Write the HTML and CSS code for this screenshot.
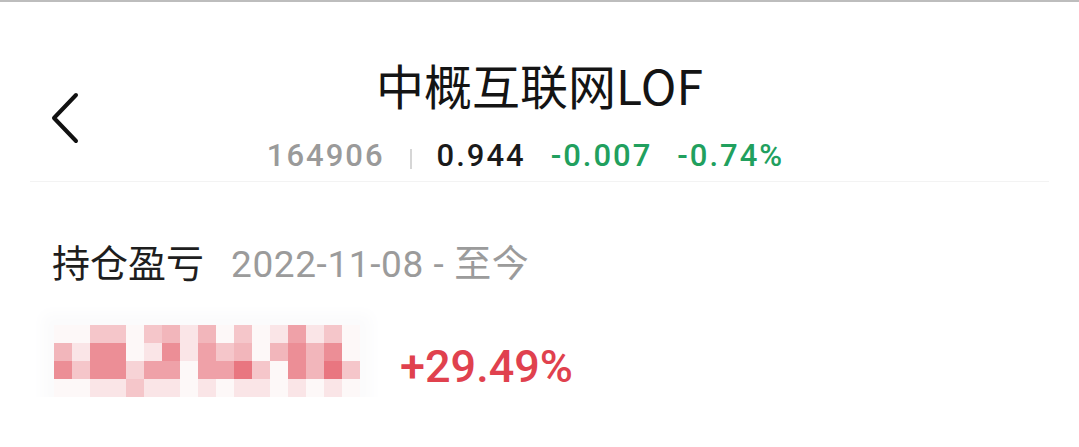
FILE: index.html
```html
<!DOCTYPE html>
<html lang="zh-CN">
<head>
    <meta charset="UTF-8">
    <title>中概互联网LOF</title>
    <link rel="stylesheet" href="styles.css">
</head>
<body>
    <div class="topline"></div>
    <div id="header">
        <div class="back">
            <svg width="30" height="54" viewBox="0 0 30 54">
                <polyline points="26,4 4,27 26,50" fill="none" stroke="#111" stroke-width="4" stroke-linecap="round" stroke-linejoin="round"/>
            </svg>
        </div>
        <div class="title-box">
            <div class="title">中概互联网LOF</div>
            <div class="quote">
                <span class="code">164906</span>
                <span class="sep"></span>
                <span class="price">0.944</span>
                <span class="down">-0.007</span>
                <span class="down">-0.74%</span>
            </div>
        </div>
    </div>
    <div class="divider"></div>
    <div id="profit">
        <div class="profit-head">
            <span class="label">持仓盈亏</span>
            <span class="range">2022-11-08 - 至今</span>
        </div>
        <div class="profit-row">
            <div class="mosaic">
                <!-- 第1行 -->
                <i class="s0"></i><i class="s0"></i><i class="s2"></i><i class="s2"></i><i class="s0"></i><i class="s2"></i><i class="s2b"></i><i class="s1"></i><i class="s2b"></i><i class="s0"></i><i class="s2"></i><i class="s0"></i><i class="s1"></i><i class="s3"></i><i class="s1"></i><i class="s2"></i><i class="s0"></i>
                <!-- 第2行 -->
                <i class="s2b"></i><i class="s1"></i><i class="s4"></i><i class="s4"></i><i class="s0"></i><i class="s1"></i><i class="s4"></i><i class="s1"></i><i class="s3"></i><i class="s2"></i><i class="s2b"></i><i class="s0"></i><i class="s2b"></i><i class="s4"></i><i class="s2b"></i><i class="s4"></i><i class="s0"></i>
                <!-- 第3行 -->
                <i class="s4"></i><i class="s2"></i><i class="s4"></i><i class="s4"></i><i class="s1b"></i><i class="s3"></i><i class="s3"></i><i class="s0"></i><i class="s3"></i><i class="s3"></i><i class="s5"></i><i class="s2"></i><i class="s0"></i><i class="s4"></i><i class="s2b"></i><i class="s5"></i><i class="s2"></i>
                <!-- 第4行 -->
                <i class="s0"></i><i class="s0"></i><i class="s1"></i><i class="s1"></i><i class="s2"></i><i class="s1"></i><i class="s1"></i><i class="s0"></i><i class="s1"></i><i class="s0"></i><i class="s1"></i><i class="s1"></i><i class="s0"></i><i class="s1"></i><i class="s0"></i><i class="s1"></i><i class="s0"></i>
            </div>
            <div class="rate">+29.49%</div>
        </div>
    </div>
</body>
</html>
```

FILE: styles.css
```css
*{
    margin: 0;
    padding: 0;
}
body{
    background: #fff;
    font-family: Roboto, "Noto Sans CJK SC", sans-serif;
    color: #1a1a1a;
}
.topline{
    height: 2px;
    background: #bdbdbd;
}
#header{
    display: grid;
    grid-template-columns: 1fr auto 1fr;
    padding-top: 54px;
}
#header .back{
    padding-left: 50px;
    margin-top: 35px;
}
.title-box{
    display: flex;
    flex-direction: column;
    align-items: center;
}
.title{
    font-family: "Noto Sans CJK SC", sans-serif;
    font-size: 48px;
    font-weight: 400;
    line-height: 56px;
    color: #141414;
}
.quote{
    display: flex;
    align-items: center;
    gap: 25px;
    margin-top: 26px;
    margin-right: 28px;
    font-size: 31px;
    font-weight: 500;
    line-height: 36px;
    letter-spacing: 2px;
}
.quote .code{
    color: #9a9a9a;
}
.quote .sep{
    width: 2px;
    height: 20px;
    margin-top: 6px;
    background: #d6d6d6;
}
.quote .price{
    color: #1a1a1a;
}
.quote .down{
    color: #21a05e;
}
.divider{
    height: 1px;
    margin: 7px 30px 0;
    background: #f3f3f3;
}
#profit{
    padding-left: 52px;
}
.profit-head{
    display: flex;
    align-items: baseline;
    gap: 27px;
    margin-top: 56px;
    line-height: 46px;
}
.profit-head .label{
    font-family: "Noto Sans CJK SC", sans-serif;
    font-size: 38px;
    color: #1e1e1e;
}
.profit-head .range{
    font-size: 37px;
    letter-spacing: 0.6px;
    color: #9b9b9b;
}
.profit-row{
    display: flex;
    align-items: flex-start;
    gap: 40px;
    margin-top: 37px;
}
.mosaic{
    display: grid;
    grid-template-columns: repeat(17, 18px);
    grid-auto-rows: 18px;
    margin-left: 2px;
    box-shadow: 0 0 14px 12px #fbfbfc;
}
.mosaic i{
    display: block;
}
.mosaic .s0{ background: #fdf8f8; }
.mosaic .s1{ background: #fae5e7; }
.mosaic .s1b{ background: #f7d3d6; }
.mosaic .s2{ background: #f5c6ca; }
.mosaic .s2b{ background: #f2b6bb; }
.mosaic .s3{ background: #efa1a8; }
.mosaic .s4{ background: #ec8e96; }
.mosaic .s5{ background: #e97680; }
.rate{
    margin-top: 16px;
    font-size: 45px;
    font-weight: 500;
    line-height: 52px;
    color: #e0414e;
}
```
